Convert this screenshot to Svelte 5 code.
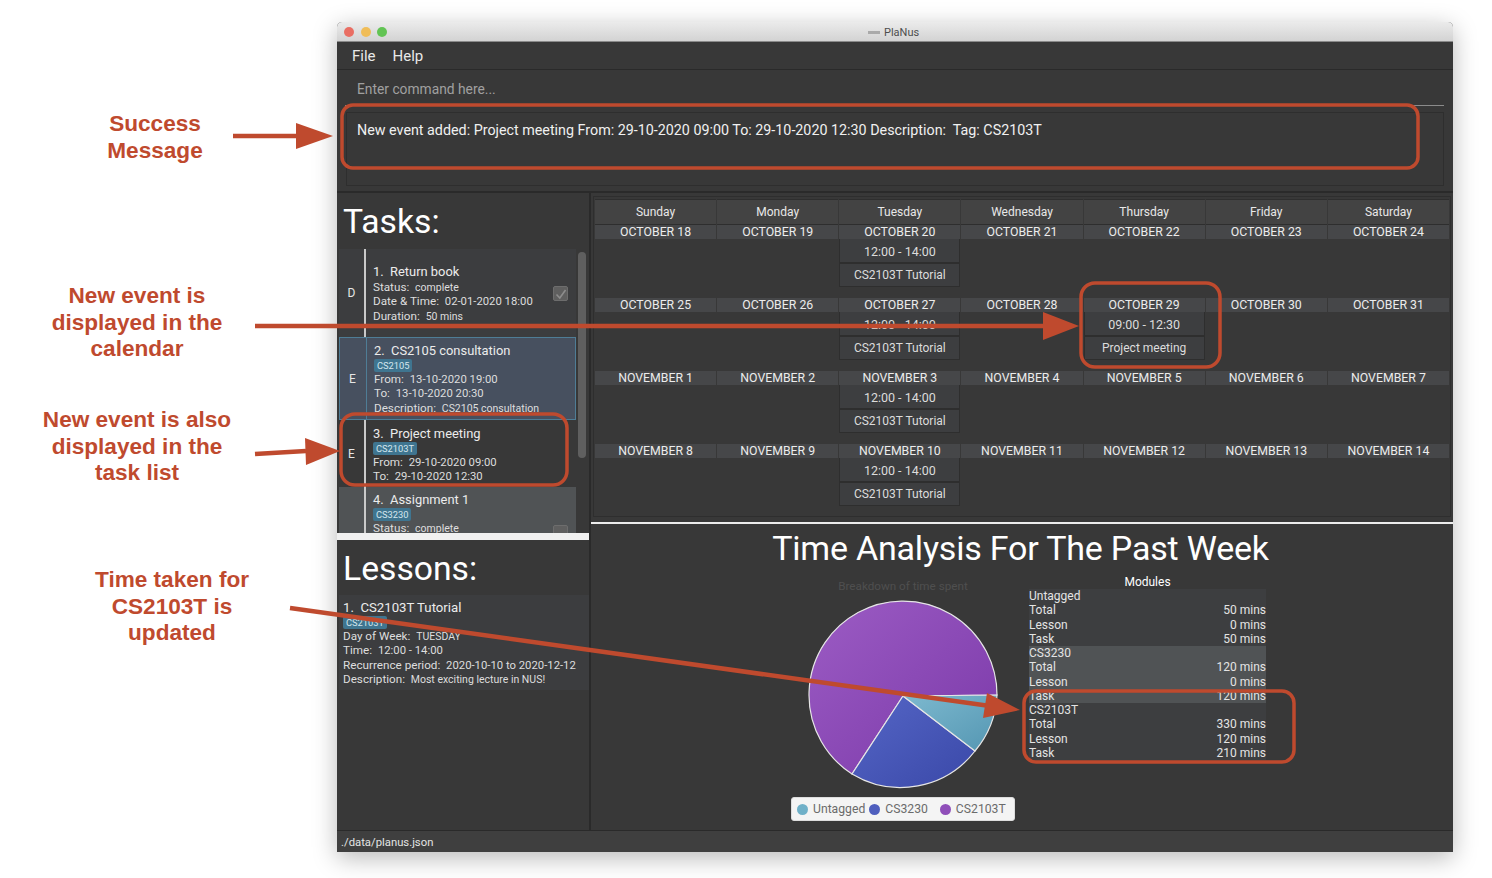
<script>
  const days = ['Sunday', 'Monday', 'Tuesday', 'Wednesday', 'Thursday', 'Friday', 'Saturday'];
  const tutorial = { time: '12:00 - 14:00', name: 'CS2103T Tutorial' };
  const weeks = [
    { dates: ['OCTOBER 18', 'OCTOBER 19', 'OCTOBER 20', 'OCTOBER 21', 'OCTOBER 22', 'OCTOBER 23', 'OCTOBER 24'], events: { 2: tutorial } },
    { dates: ['OCTOBER 25', 'OCTOBER 26', 'OCTOBER 27', 'OCTOBER 28', 'OCTOBER 29', 'OCTOBER 30', 'OCTOBER 31'], events: { 2: tutorial, 4: { time: '09:00 - 12:30', name: 'Project meeting' } } },
    { dates: ['NOVEMBER 1', 'NOVEMBER 2', 'NOVEMBER 3', 'NOVEMBER 4', 'NOVEMBER 5', 'NOVEMBER 6', 'NOVEMBER 7'], events: { 2: tutorial } },
    { dates: ['NOVEMBER 8', 'NOVEMBER 9', 'NOVEMBER 10', 'NOVEMBER 11', 'NOVEMBER 12', 'NOVEMBER 13', 'NOVEMBER 14'], events: { 2: tutorial } }
  ];
  const modules = [
    { name: 'Untagged', total: 50, lesson: 0, task: 50 },
    { name: 'CS3230', total: 120, lesson: 0, task: 120 },
    { name: 'CS2103T', total: 330, lesson: 120, task: 210 }
  ];
  const notes = [
    { cls: 'n1', lines: ['Success', 'Message'] },
    { cls: 'n2', lines: ['New event is', 'displayed in the', 'calendar'] },
    { cls: 'n3', lines: ['New event is also', 'displayed in the', 'task list'] },
    { cls: 'n4', lines: ['Time taken for', 'CS2103T is', 'updated'] }
  ];
</script>

<div class="page">
  <div class="window">
    <div class="titlebar">
      <span class="light red"></span>
      <span class="light yellow"></span>
      <span class="light green"></span>
      <span class="wintitle"><i></i>PlaNus</span>
    </div>
    <div class="menu"><span>File</span><span>Help</span></div>
    <div class="command"><div class="cmdline">Enter command here...</div></div>
    <div class="result">
      <div class="resultbox">New event added: Project meeting From: 29-10-2020 09:00 To: 29-10-2020 12:30 Description:&nbsp; Tag: CS2103T</div>
    </div>

    <div class="main">
      <div class="left">
        <div class="tasks">
          <h1>Tasks:</h1>
          <div class="listwrap">
            <div class="list">
              <div class="task t1">
                <div class="kind">D</div>
                <div class="body">
                  <div class="name">1.&nbsp; Return book</div>
                  <div class="row">Status:&nbsp; <small>complete</small></div>
                  <div class="row">Date &amp; Time:&nbsp; <small class="num">02-01-2020 18:00</small></div>
                  <div class="row">Duration:&nbsp; <small>50 mins</small></div>
                </div>
                <div class="check"><svg viewBox="0 0 16 16" width="16" height="16"><path d="M3.5 8.5 L6.8 12 L12.5 4" fill="none" stroke="#8d8d8d" stroke-width="1.6"/></svg></div>
              </div>
              <div class="task t2">
                <div class="kind">E</div>
                <div class="body">
                  <div class="name">2.&nbsp; CS2105 consultation</div>
                  <span class="tag">CS2105</span>
                  <div class="row">From:&nbsp; <small class="num">13-10-2020 19:00</small></div>
                  <div class="row">To:&nbsp; <small class="num">13-10-2020 20:30</small></div>
                  <div class="row">Description:&nbsp; <small>CS2105 consultation</small></div>
                </div>
              </div>
              <div class="task t3">
                <div class="kind">E</div>
                <div class="body">
                  <div class="name">3.&nbsp; Project meeting</div>
                  <span class="tag">CS2103T</span>
                  <div class="row">From:&nbsp; <small class="num">29-10-2020 09:00</small></div>
                  <div class="row">To:&nbsp; <small class="num">29-10-2020 12:30</small></div>
                </div>
              </div>
              <div class="task t4">
                <div class="kind">D</div>
                <div class="body">
                  <div class="name">4.&nbsp; Assignment 1</div>
                  <span class="tag">CS3230</span>
                  <div class="row">Status:&nbsp; <small>complete</small></div>
                </div>
                <div class="check low"></div>
              </div>
            </div>
            <div class="track"><div class="thumb"></div></div>
          </div>
        </div>
        <div class="lessons">
          <h1>Lessons:</h1>
          <div class="lesson">
            <div class="name">1.&nbsp; CS2103T Tutorial</div>
            <span class="tag">CS2103T</span>
            <div class="row">Day of Week:&nbsp; <small>TUESDAY</small></div>
            <div class="row">Time:&nbsp; <small class="num">12:00 - 14:00</small></div>
            <div class="row">Recurrence period:&nbsp; <small class="num">2020-10-10 to 2020-12-12</small></div>
            <div class="row">Description:&nbsp; <small>Most exciting lecture in NUS!</small></div>
          </div>
        </div>
      </div>

      <div class="right">
        <div class="calwrap">
          <div class="calendar">
            <div class="cols head">
              {#each days as d}<div class="dayname">{d}</div>{/each}
            </div>
            {#each weeks as w}
              <div class="cols week">
                {#each w.dates as date, i}
                  <div class="day">
                    <div class="date">{date}</div>
                    {#if w.events[i]}
                      <div class="ev">{w.events[i].time}</div>
                      <div class="ev name2">{w.events[i].name}</div>
                    {/if}
                  </div>
                {/each}
              </div>
            {/each}
          </div>
        </div>

        <div class="analysis">
          <h2>Time Analysis For The Past Week</h2>
          <div class="charts">
            <div class="piecol">
              <div class="pietitle">Breakdown of time spent</div>
              <svg class="pie" width="192" height="192" viewBox="-96 -96 192 192">
                <defs>
                  <linearGradient id="gPurple" x1="0" y1="0" x2="1" y2="1">
                    <stop offset="0" stop-color="#9c5cc4"/><stop offset="1" stop-color="#7a38a8"/>
                  </linearGradient>
                  <linearGradient id="gBlue" x1="0" y1="0" x2="1" y2="1">
                    <stop offset="0" stop-color="#5566c6"/><stop offset="1" stop-color="#3a48a8"/>
                  </linearGradient>
                  <linearGradient id="gTeal" x1="0" y1="0" x2="1" y2="1">
                    <stop offset="0" stop-color="#7db9cf"/><stop offset="1" stop-color="#5496b2"/>
                  </linearGradient>
                </defs>
                <path d="M0 0 L94 -1 A94 94 0 1 0 -51 78 Z" fill="url(#gPurple)" stroke="#e6e6e6" stroke-width="1.2"/>
                <path d="M0 0 L-51 78 A94 94 0 0 0 72 55 Z" fill="url(#gBlue)" stroke="#e6e6e6" stroke-width="1.2"/>
                <path d="M0 0 L72 55 A94 94 0 0 0 94 -1 Z" fill="url(#gTeal)" stroke="#e6e6e6" stroke-width="1.2"/>
              </svg>
              <div class="legend">
                <span class="dot teal"></span><span class="lg">Untagged</span>
                <span class="dot blue"></span><span class="lg wide">CS3230</span>
                <span class="dot purple"></span><span class="lg">CS2103T</span>
              </div>
            </div>
            <div class="tablecol">
              <div class="tabletitle">Modules</div>
              {#each modules as m, i}
                <div class="group" class:alt={i === 1}>
                  <div class="trow"><span>{m.name}</span></div>
                  <div class="trow"><span>Total</span><span>{m.total} mins</span></div>
                  <div class="trow"><span>Lesson</span><span>{m.lesson} mins</span></div>
                  <div class="trow"><span>Task</span><span>{m.task} mins</span></div>
                </div>
              {/each}
            </div>
          </div>
        </div>
      </div>
    </div>

    <div class="status">./data/planus.json</div>
  </div>

  {#each notes as n}
    <div class="note {n.cls}">
      {#each n.lines as l}<div>{l}</div>{/each}
    </div>
  {/each}

  <!-- callout arrows and boxes drawn over the screenshot -->
  <svg class="overlay" width="1492" height="878" viewBox="0 0 1492 878">
    <g fill="none" stroke="#bf4a2e" stroke-width="3.5">
      <rect x="342" y="105" width="1076" height="63" rx="11"/>
      <rect x="1081" y="283" width="139" height="84" rx="14"/>
      <rect x="341" y="414" width="226" height="71" rx="14"/>
      <rect x="1024" y="691" width="270" height="71" rx="12"/>
    </g>
    <g fill="none" stroke="#bf4a2e" stroke-width="4.5">
      <path d="M233 136 H300"/>
      <path d="M255 326 H1045"/>
      <path d="M255 454 L306 451"/>
      <path d="M290 608 L990 706"/>
    </g>
    <g fill="#bf4a2e">
      <path d="M296 123 L333 136 L296 149 Z"/>
      <path d="M1043 312 L1079 326 L1043 340 Z"/>
      <path d="M305 438 L340 451 L306 465 Z"/>
      <path d="M987 693 L1020 710 L983 718 Z"/>
    </g>
  </svg>
</div>

<style>
  :global(body) {
    margin: 0;
    background: #fff;
  }
  .page {
    position: relative;
    width: 1492px;
    height: 878px;
    box-sizing: border-box;
    padding: 22px 39px 26px 337px;
    overflow: hidden;
    font-family: Roboto, "Liberation Sans", sans-serif;
  }
  .window {
    height: 830px;
    display: flex;
    flex-direction: column;
    background: #383838;
    color: #e6e6e6;
    border-radius: 5px 5px 0 0;
    box-shadow: 0 6px 24px rgba(0, 0, 0, 0.28);
    overflow: hidden;
  }
  .titlebar {
    height: 20px;
    flex: none;
    display: flex;
    align-items: center;
    gap: 6.5px;
    padding-left: 7px;
    position: relative;
    background: linear-gradient(#ebebeb, #d3d3d3);
    border-bottom: 1px solid #8a8a8a;
    box-sizing: border-box;
  }
  .light {
    width: 10px;
    height: 10px;
    border-radius: 50%;
  }
  .red { background: #e96e63; }
  .yellow { background: #f0bd58; }
  .green { background: #62c454; }
  .wintitle {
    position: absolute;
    left: 531px;
    top: 4px;
    font-size: 11px;
    line-height: 13px;
    color: #4d4d4d;
  }
  .wintitle i {
    display: inline-block;
    width: 12px;
    height: 3px;
    margin-right: 4px;
    vertical-align: 2px;
    background: #aaa;
  }
  .menu {
    height: 28px;
    flex: none;
    display: flex;
    align-items: center;
    gap: 17px;
    padding-left: 15px;
    box-sizing: border-box;
    font-size: 15px;
    border-bottom: 1px solid #2a2a2a;
    color: #e8e8e8;
  }
  .command {
    height: 36px;
    flex: none;
    padding: 0 9px 0 20px;
    box-sizing: border-box;
  }
  .cmdline {
    height: 35px;
    line-height: 38px;
    font-size: 13.8px;
    color: #a0a0a0;
    border-bottom: 1.5px solid #8b8b8b;
    margin-left: -12px;
    padding-left: 12px;
  }
  .result {
    height: 87px;
    flex: none;
    padding: 6px 9px 5px 9px;
    box-sizing: border-box;
    border-bottom: 2px solid #2a2a2a;
  }
  .resultbox {
    height: 100%;
    box-sizing: border-box;
    border: 1px solid #2e2e2e;
    padding: 8px 10px;
    font-size: 14.3px;
    line-height: 18px;
    color: #f0f0f0;
  }
  .main {
    flex: 1;
    display: flex;
    min-height: 0;
  }
  .left {
    width: 254px;
    flex: none;
    display: flex;
    flex-direction: column;
    border-right: 2px solid #2a2a2a;
    box-sizing: border-box;
  }
  h1 {
    margin: 0;
    padding: 1px 0 0 6px;
    font-weight: 400;
    font-size: 33.7px;
    line-height: 55px;
    color: #fff;
  }
  .tasks h1 {
    padding-top: 2px;
    line-height: 54px;
  }
  .tasks {
    height: 340px;
    flex: none;
    overflow: hidden;
    border-bottom: 7px solid #f0f0f0;
    box-sizing: content-box;
  }
  .listwrap {
    display: flex;
    height: 284px;
    padding-left: 2px;
  }
  .list {
    width: 237px;
    flex: none;
    overflow: hidden;
  }
  .track {
    flex: 1;
    padding: 3px 2px 0 2px;
  }
  .thumb {
    width: 8px;
    height: 206px;
    border-radius: 4px;
    background: #5f5f5f;
  }
  .task {
    display: flex;
    box-sizing: border-box;
    background: #3c3d3f;
  }
  .kind {
    width: 25px;
    flex: none;
    display: flex;
    align-items: center;
    justify-content: center;
    font-size: 12px;
    border-right: 2.5px solid #c9c9c9;
  }
  .body {
    flex: 1;
    min-width: 0;
    padding-left: 7px;
  }
  .name {
    font-size: 12.9px;
    line-height: 17px;
    color: #ececec;
  }
  .row {
    font-size: 11.7px;
    line-height: 14.4px;
    color: #dedede;
    white-space: nowrap;
  }
  small {
    font-size: 10.5px;
    line-height: 1;
  }
  small.num {
    font-size: 11.3px;
  }
  .tag {
    display: block;
    width: fit-content;
    font-size: 9.3px;
    line-height: 13px;
    padding: 0 3px;
    border-radius: 2px;
    background: #3f7590;
    color: #d5e6ee;
  }
  .t1 { height: 88px; padding-top: 14px; }
  .t1 .kind { margin-top: -14px; }
  .t2 {
    height: 83px;
    padding-top: 5px;
    background: #47505f;
    outline: 1px solid #4f7d96;
    outline-offset: -1px;
    overflow: hidden;
  }
  .t2 .kind { margin-top: -5px; border-right: 1px solid #4f7d96; width: 27px; }
  .t3 { height: 67px; padding-top: 5px; background: #383838; }
  .t3 .kind { margin-top: -5px; }
  .t4 { height: 60px; padding-top: 4px; background: #505355; }
  .t4 .kind { margin-top: -4px; align-items: flex-end; }
  .check {
    width: 15px;
    height: 15px;
    margin: 23px 8px 0 0;
    background: #5f5f5f;
    border: 1px solid #6d6d6d;
    border-radius: 2px;
    box-sizing: border-box;
    flex: none;
    display: flex;
    align-items: center;
    justify-content: center;
  }
  .check svg { flex: none; }
  .check.low { margin-top: 34px; }
  .lessons {
    flex: 1;
    min-height: 0;
  }
  .lesson {
    margin: -1px 0 0 2px;
    height: 95px;
    padding: 4px 0 0 4px;
    box-sizing: border-box;
    background: #3c3d3f;
  }
  .lesson .name { font-size: 13.2px; }
  .right {
    flex: 1;
    min-width: 0;
    display: flex;
    flex-direction: column;
  }
  .calwrap {
    height: 331px;
    flex: none;
    box-sizing: border-box;
    padding: 3px 2px 5px 2px;
    border-bottom: 2px solid #ececec;
  }
  .calendar {
    height: 100%;
    box-sizing: border-box;
    border: 1px solid #2e2e2e;
    padding: 2px 1px 0 1px;
  }
  .cols {
    display: grid;
    grid-template-columns: repeat(7, 1fr);
    column-gap: 1px;
  }
  .head { height: 25px; }
  .dayname {
    font-size: 12px;
    line-height: 24px;
    text-align: center;
    background: #434343;
    border: 1px solid #2e2e2e;
    border-width: 1px 0;
    color: #e8e8e8;
  }
  .week { height: 73px; }
  .date {
    height: 14px;
    margin-top: 1px;
    font-size: 12.3px;
    line-height: 14px;
    text-align: center;
    background: #464749;
    color: #ececec;
  }
  .ev {
    height: 24px;
    box-sizing: border-box;
    line-height: 25px;
    font-size: 12.5px;
    text-align: center;
    background: #3d3e40;
    border: 1px solid #2e2e2e;
    border-top: 0;
    color: #dcdcdc;
  }
  .name2 {
    font-size: 12px;
    line-height: 22px;
    border-top: 1px solid #2e2e2e;
  }
  .analysis {
    flex: 1;
    min-height: 0;
    display: flex;
    flex-direction: column;
  }
  h2 {
    margin: 0;
    font-weight: 400;
    font-size: 34px;
    letter-spacing: -0.2px;
    line-height: 48px;
    text-align: center;
    color: #fff;
    height: 50px;
    padding-right: 3px;
  }
  .charts {
    display: flex;
    padding-left: 200px;
  }
  .piecol {
    width: 224px;
    flex: none;
    display: flex;
    flex-direction: column;
    align-items: center;
  }
  .pietitle {
    font-size: 11.7px;
    line-height: 24px;
    color: #4f4f4f;
  }
  .pie { margin-top: 2px; }
  .legend {
    margin-top: 5px;
    width: 224px;
    height: 24px;
    box-sizing: border-box;
    display: flex;
    align-items: center;
    padding-left: 5px;
    background: #f4f4f4;
    border: 1px solid #ddd;
    border-radius: 3px;
  }
  .dot {
    width: 11px;
    height: 11px;
    border-radius: 50%;
    margin-right: 5px;
  }
  .teal { background: #6fb0c8; }
  .blue { background: #4f5fbe; }
  .purple { background: #8f4fb9; }
  .lg {
    font-size: 12.2px;
    color: #6b6b6b;
    margin-right: 4px;
  }
  .lg.wide { margin-right: 12px; }
  .tablecol {
    width: 237px;
    margin-left: 14px;
    margin-top: 1px;
  }
  .tabletitle {
    font-size: 12px;
    line-height: 14px;
    text-align: center;
    color: #fff;
  }
  .group { background: #3d3e40; }
  .group.alt { background: #505355; }
  .trow {
    display: flex;
    justify-content: space-between;
    font-size: 12px;
    line-height: 14.25px;
    height: 14.25px;
    color: #e4e4e4;
  }
  .status {
    height: 22px;
    flex: none;
    box-sizing: border-box;
    font-size: 11.3px;
    line-height: 23px;
    padding-left: 4px;
    background: #3f3f3f;
    border-top: 1px solid #2a2a2a;
    color: #e4e4e4;
  }
  .note {
    position: absolute;
    transform: translateX(-50%);
    text-align: center;
    white-space: nowrap;
    font-family: "Liberation Sans", Arial, sans-serif;
    font-weight: 700;
    font-size: 22.6px;
    line-height: 26.7px;
    color: #bf4a2e;
  }
  .n1 { left: 155px; top: 111px; }
  .n2 { left: 137px; top: 283px; }
  .n3 { left: 137px; top: 407px; }
  .n4 { left: 172px; top: 567px; }
  .overlay {
    position: absolute;
    left: 0;
    top: 0;
    pointer-events: none;
  }
</style>
